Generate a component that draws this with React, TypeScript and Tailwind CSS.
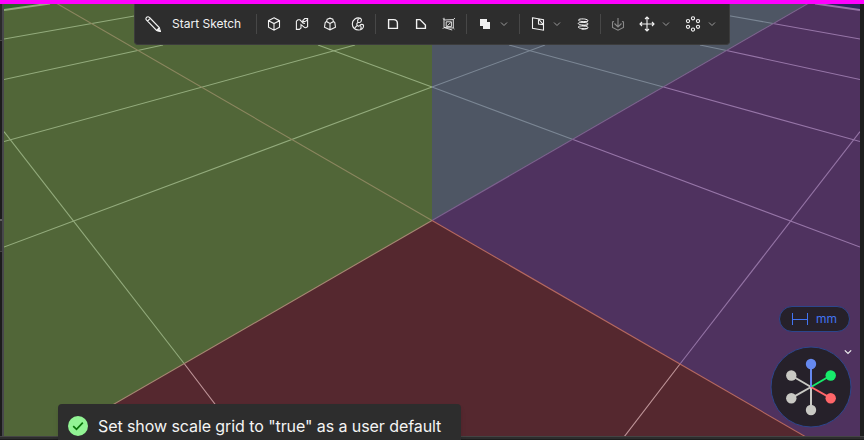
import React from "react";

type Seg = [number, number, number, number, string, number?];

// Grid lines and axes of the viewport, in scene pixels.
const lines: Seg[] = [
  [432, 87, 4, 247, "#93ab7c"],
  [355, 45, 4, 141.5, "#93ab7c"],
  [163, 45, 4, 79.5, "#93ab7c"],
  [140, 15, 4, 39, "#93ab7c"],
  [50, 3.5, 4, 10, "#93ab7c", 1.9],
  [432, 87, 318, 45, "#93ab7c"],
  [4, 131.5, 184.5, 364, "#93ab7c"],
  [184.5, 364, 240, 437, "#c0969a"],
  [56, 3, 432, 220.5, "#8b865f"],
  [432, 87, 545, 45, "#7b8694"],
  [432, 87, 573, 139.5, "#7b8694"],
  [509, 45, 663.5, 87, "#7b8694"],
  [700, 45, 726.5, 50.5, "#7b8694"],
  [725, 15, 773, 23.5, "#7b8694"],
  [573, 139.5, 860, 247, "#9675a7"],
  [663.5, 87, 860, 141.5, "#9675a7"],
  [726.5, 50.5, 860, 79.5, "#9675a7"],
  [773, 23.5, 860, 39, "#9675a7"],
  [815, 3.5, 860, 10, "#9675a7", 1.9],
  [860, 131.5, 680, 364, "#9474a5"],
  [680, 364, 624, 437, "#c0969a"],
  [432, 220.5, 809, 3, "#7d628f"],
  [432, 220.5, 806, 437, "#b56861"],
  [432, 220.5, 57, 437, "#a68873"],
];

function Scene() {
  return (
    <svg className="block h-full w-full" viewBox="4 4 856 432" preserveAspectRatio="none">
      <rect x="4" y="4" width="428" height="433" fill="#516638" />
      <path d="M4 4H47L4 9.5Z" fill="#2f632d" />
      <path d="M432 4H808L432 220.5Z" fill="#4e5664" />
      <path d="M432 220.5L808 4H860V437H806Z" fill="#4f325f" />
      <path d="M818 4H860V9.5Z" fill="#2b255c" />
      <path d="M432 220.5L806 437H57Z" fill="#55282f" />
      {lines.map(([x1, y1, x2, y2, c, w], i) => (
        <line key={i} x1={x1} y1={y1} x2={x2} y2={y2} stroke={c} strokeWidth={w ?? 1.1} />
      ))}
    </svg>
  );
}

function Icon({ children, dim }: { children: React.ReactNode; dim?: boolean }) {
  return (
    <svg
      className={dim ? "h-4 w-4 shrink-0 text-[#8a8a8a]" : "h-4 w-4 shrink-0 text-[#f2f2f2]"}
      viewBox="0 0 16 16"
      fill="none"
      stroke="currentColor"
      strokeWidth="1.1"
    >
      {children}
    </svg>
  );
}

function Chevron() {
  return (
    <svg className="h-2 w-2 shrink-0 text-[#9a9a9a]" viewBox="0 0 8 8" fill="none" stroke="currentColor">
      <path d="M1 2.5L4 5.5L7 2.5" />
    </svg>
  );
}

const Divider = () => <div className="h-5 w-px shrink-0 bg-[#474747]" />;

function Toolbar() {
  return (
    <div className="absolute top-[4px] left-[134px] flex h-[41px] w-[596px] items-center rounded-b border border-t-0 border-[#3c3c3c] bg-[#2d2d2d] pl-[10px]">
      <svg className="h-4 w-4 shrink-0 text-[#f2f2f2]" viewBox="0 0 16 16" fill="none" stroke="currentColor" strokeWidth="1.1">
        <path d="M1.4 1.5C2.4 .5 3.6.5 4.5 1.5L14.3 11.6L15.4 15.4L11.6 14.4L1.6 4.2C.8 3.3 .6 2.4 1.4 1.5ZM11.6 14.4L14.3 11.6M2.6 5L5.2 2.4" />
        <path d="M13.3 13.5L15.2 15.3L12.6 14.7Z" fill="currentColor" />
      </svg>
      <span className="ml-[11px] w-[70px] font-[Inter,sans-serif] text-[12px] leading-4 whitespace-nowrap text-[#f2f2f2]">
        Start Sketch
      </span>
      <div className="ml-[14px] flex items-center">
        <Divider />
        <div className="ml-[9px] flex gap-3">
          <Icon>
            <path d="M8 1.8L13.5 4.7V11.2L8 14.2L2.5 11.2V4.7ZM2.5 4.7L8 7.6L13.5 4.7M8 7.6V14.2" />
          </Icon>
          <Icon>
            <path d="M2.4 13.4V5.2L4 3.8H6L8.8 6.8V4.5L10.8 2.5H13.6V10.6L11.8 11.8C10 11.6 9.3 10 7 8.6V12L5.4 13.4ZM8.8 4.8C10 6 12 5.8 13.4 3.5M8.8 6.8L11 7.5" />
          </Icon>
          <Icon>
            <path d="M5.2 3.2L8 2.2L10.8 3.2L11.5 5.6L8 7.4L4.5 5.6ZM4.5 5.3L3.2 6.5L2.5 11.2L8 13.8L13.5 11.2L12.8 6.5L11.5 5.3M8 7.4V13.8" />
          </Icon>
          <Icon>
            <path d="M10.5 2.3C6.5.9 2.3 3.5 2.3 8C2.3 12 5.5 14 8.5 14C11.5 14 13.6 12 13.6 9.8C13.6 8 10.5 7.8 9.8 9.5C9 10.6 6.8 10 6.8 8.2C6.8 6.7 8 6.3 9.3 6.5C11.3 6.5 12.3 3.6 10.5 2.3ZM10.5 2.3C8.5 2.3 7 4 7.8 6M9.8 9.5C11.4 9.8 11.5 12 10.5 13.5M4.8 11.8L7 9.6" />
          </Icon>
        </div>
        <div className="ml-[9px]">
          <Divider />
        </div>
        <div className="ml-[9px] flex gap-3">
          <Icon>
            <path d="M3.6 3.6H8.6Q12.4 3.6 12.4 7.4V12.4H3.6Z" strokeWidth="1.4" />
          </Icon>
          <Icon>
            <path d="M3.6 3.6H7L12.4 9V12.4H3.6Z" strokeWidth="1.4" />
          </Icon>
          <Icon>
            <path d="M3 1.8V11.5L11.2 14M3.5 4L12.3 3.6V12L3 11.5M12.3 3.6L14 2M3.5 4L2.2 2.6M5.2 5.8H10.4V10.6H5.2ZM6.3 9.8L9.6 6.6M3 11.5L1.8 12.8M12.3 12L13.4 13" strokeWidth=".9" />
          </Icon>
        </div>
        <div className="ml-[9px]">
          <Divider />
        </div>
        <div className="ml-[10px] flex items-center gap-[7px]">
          <Icon>
            <path d="M3 3H10V6H13V13H6V10H3Z" fill="currentColor" stroke="none" />
          </Icon>
          <Chevron />
        </div>
        <div className="ml-[11px]">
          <Divider />
        </div>
        <div className="ml-[10px] flex items-center gap-[7px]">
          <Icon>
            <path d="M2.5 1.8L13.5 3.8V14.2L2.5 12.4ZM8.5 3V8L13.5 8.8M8.5 3L13.5 8.8" />
          </Icon>
          <Chevron />
        </div>
        <div className="ml-[14px]">
          <Icon>
            <path d="M12.6 5.2C10 6 3.4 5.6 3.4 4C3.4 2.6 11 2.4 12.8 4.2C14 6 10 6 7 6.2M12.6 9C9 9.4 3.2 8.8 3.2 7.4C3.2 6 11 6 12.8 7.4C14 9 10 9.6 7 9.6M12.6 12.6C9 13 3.2 12.4 3.2 11C3.2 9.6 11 9.6 12.8 11C13.8 12.4 10 13.4 6.5 13.2" strokeWidth="1" />
          </Icon>
        </div>
        <div className="ml-[9px]">
          <Divider />
        </div>
        <div className="ml-[9px]">
          <Icon dim>
            <path d="M8 2V11M4.5 7.5L8 11L11.5 7.5M4 5.5L2.5 6V11.5L8 14.2L13.5 11.5V6L12 5.5" />
          </Icon>
        </div>
        <div className="ml-[13px] flex items-center gap-[7px]">
          <Icon>
            <path d="M8 1V15M1 8H15M6 3L8 1L10 3M6 13L8 15L10 13M3 6L1 8L3 10M13 6L15 8L13 10" />
          </Icon>
          <Chevron />
        </div>
        <div className="ml-[15px] flex items-center gap-[7px]">
          <Icon>
            <circle cx="8" cy="2.3" r="1.6" />
            <circle cx="13" cy="5.1" r="1.6" />
            <circle cx="13" cy="10.8" r="1.6" />
            <circle cx="8" cy="13.6" r="1.6" />
            <circle cx="3" cy="10.8" r="1.6" />
            <circle cx="3" cy="5.1" r="1.6" />
          </Icon>
          <Chevron />
        </div>
      </div>
    </div>
  );
}

const axes: [number, number, string][] = [
  [21.3, 29.5, "#c9c9c4"],
  [21.3, 52.2, "#c9c9c4"],
  [41, 64, "#c9c9c4"],
  [60.7, 29.5, "#17eb6b"],
  [60.7, 52.2, "#ff6669"],
  [41, 18, "#6689ef"],
];

function Gizmo() {
  return (
    <svg className="h-[82px] w-[82px]" viewBox="0 0 82 82">
      <circle cx="41" cy="41" r="40" fill="#26212a" stroke="#2c468c" />
      {axes.map(([x, y, c], i) => (
        <g key={i} fill={c} stroke={c}>
          <line x1="41" y1="41" x2={x} y2={y} strokeWidth="2" />
          <circle cx={x} cy={y} r="5.2" stroke="none" />
        </g>
      ))}
    </svg>
  );
}

export default function App() {
  return (
    <div className="relative flex h-[440px] w-[864px] flex-col overflow-hidden bg-[#1d1d1d] font-[Inter,sans-serif]">
      <div className="h-[4px] shrink-0 bg-[#ff00ff]" />
      <div className="flex h-[432px] shrink-0">
        <div className="flex w-[2px] flex-col bg-[#1c1c1c]">
          <div className="h-[36px] bg-[#2b2b2b]" />
          <div className="h-px bg-[#484848]" />
          <div className="mt-[178px] h-[2px] bg-[#606060]" />
          <div className="h-[30px] bg-[#2d2d2d]" />
          <div className="h-px bg-[#444444]" />
        </div>
        <div className="w-[2px] bg-[#47474b]" />
        <div className="w-[856px]">
          <Scene />
        </div>
      </div>
      <div className="h-[3px] shrink-0 border-t border-[#444444] bg-[#2d2d2d]" />
      <Toolbar />
      <div className="absolute top-[306px] left-[779px] flex h-[26px] w-[71px] items-center rounded-full border border-[#2c468c] bg-[#26212a] pl-[12px] text-[#4274f2]">
        <svg className="h-3 w-4" viewBox="0 0 16 12" fill="none" stroke="currentColor">
          <path d="M.5 0V12M15.5 0V12M.5 6.5H15.5" />
        </svg>
        <span className="ml-2 text-[12px] leading-4">mm</span>
      </div>
      <div className="absolute top-[346px] left-[770px]">
        <Gizmo />
      </div>
      <svg className="absolute top-[348px] left-[844px] h-2 w-2" viewBox="0 0 8 8" fill="none" stroke="#eeeeee" strokeWidth="1.2">
        <path d="M.8 2.4L4 5.4L7.2 2.4" />
      </svg>
      <div className="absolute top-[404px] left-[58px] flex h-[44px] w-[403px] items-center rounded bg-[#2d2d2d] pl-[10px] shadow-md">
        <svg className="h-5 w-5" viewBox="0 0 20 20" fill="none">
          <circle cx="10" cy="10" r="10" fill="#92f494" />
          <path d="M5.2 10.2L8.5 13.3L14.8 6.7" stroke="#087508" strokeWidth="1.7" />
        </svg>
        <span className="ml-[10px] text-[16px] leading-6 tracking-[-0.08px] whitespace-nowrap text-[#f4f4f4]">
          Set show scale grid to "true" as a user default
        </span>
      </div>
    </div>
  );
}
